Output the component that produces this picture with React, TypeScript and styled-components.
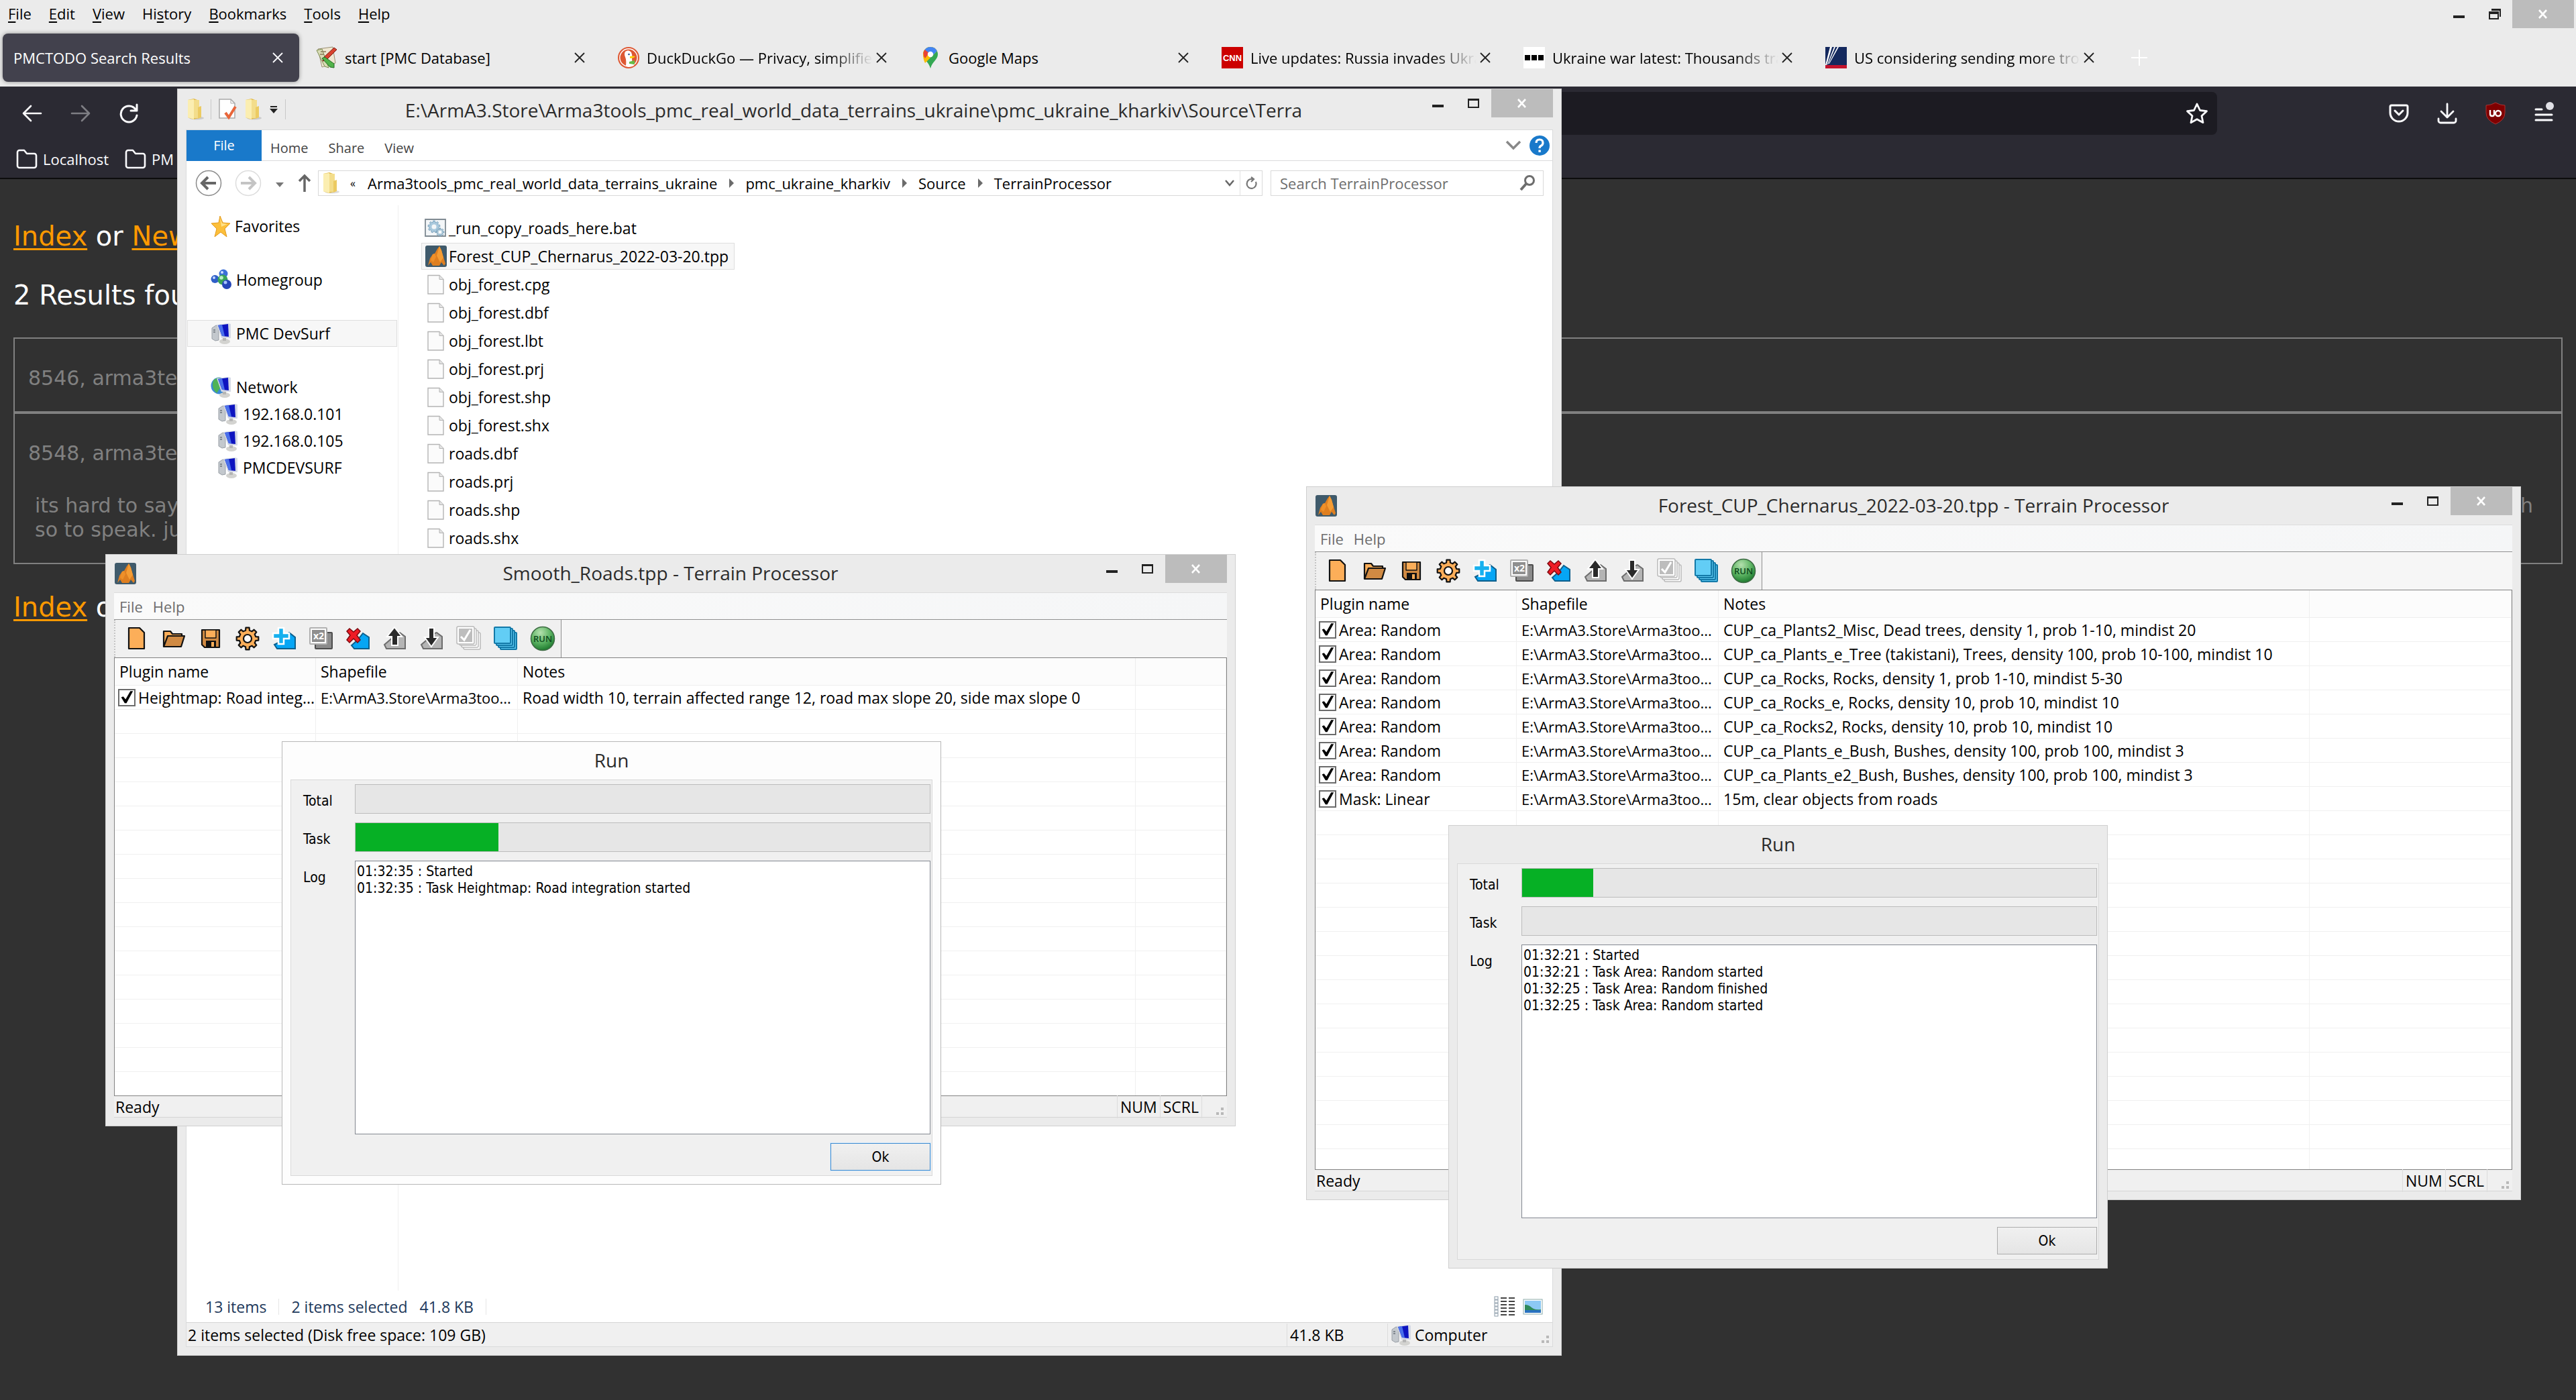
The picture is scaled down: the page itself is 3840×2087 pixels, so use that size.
import React, { useId } from "react";
import styled, { createGlobalStyle, css } from "styled-components";

const ui = `"Open Sans", "Noto Sans", sans-serif`;
const tahoma = `"DejaVu Sans Condensed", "DejaVu Sans", sans-serif`;
const verdana = `"DejaVu Sans", sans-serif`;

const Global = createGlobalStyle`
  *, *::before, *::after { box-sizing: border-box; }
  body { margin: 0; background: #313131; font-family: ${ui}; font-size: 23px; color: #000; }
  button, input, textarea { font: inherit; color: inherit; }
  button { background: none; border: 0; padding: 0; }
  svg { display: block; flex: none; }
`;

/* ---------- desktop ---------- */

const Desktop = styled.div`
  position: relative;
  min-height: 100vh;
  overflow: hidden;
  line-height: 30px;
`;

const Floating = styled.section<{ $x: number; $y: number; $w: number; $h: number; $light?: boolean }>`
  position: absolute;
  left: ${(p) => p.$x}px;
  top: ${(p) => p.$y}px;
  width: ${(p) => p.$w}px;
  height: ${(p) => p.$h}px;
  display: flex;
  flex-direction: column;
  padding: 0 12px 12px;
  background: ${(p) => (p.$light ? "#fdfdfd" : "#ebebeb")};
  border: 1px solid ${(p) => (p.$light ? "#b8b8b8" : "#cfcfcf")};
`;

const TitleBar = styled.header<{ $tall?: boolean }>`
  flex: none;
  height: ${(p) => (p.$tall ? 60 : 56)}px;
  display: grid;
  grid-template-columns: ${(p) => (p.$tall ? "auto 1fr auto" : "1fr auto 1fr")};
  align-items: center;
`;

const TitleText = styled.h2<{ $wide?: boolean }>`
  margin: 0;
  font-size: 28px;
  font-weight: 400;
  line-height: 40px;
  color: #2b2b2b;
  text-align: center;
  white-space: nowrap;
  overflow: hidden;
  padding-${(p) => (p.$wide ? "top" : "bottom")}: 2px;
`;

const TitleIcons = styled.div`
  display: flex;
  align-items: center;
  gap: 9px;
`;

const Controls = styled.div`
  justify-self: end;
  align-self: start;
  display: flex;
`;

const ControlButton = styled.button<{ $close?: boolean }>`
  width: ${(p) => (p.$close ? 92 : 52)}px;
  height: 42px;
  display: flex;
  align-items: center;
  justify-content: center;
  background: ${(p) => (p.$close ? "#bcbcbc" : "transparent")};
`;

const MinIcon = () => (
  <svg width="20" height="20" viewBox="0 0 20 20"><rect x="0" y="12" width="17" height="4" fill="#222" /></svg>
);
const MaxIcon = () => (
  <svg width="20" height="20" viewBox="0 0 20 20"><path d="M2 5h15v11H2z" fill="none" stroke="#222" strokeWidth="2" /><path d="M1 3h17v3H1z" fill="#222" /></svg>
);
const RestoreIcon = () => (
  <svg width="20" height="20" viewBox="0 0 20 20">
    <path d="M5 2h14v12h-2V5H5z" fill="#222" /><path d="M1 6h15v12H1zM3 10v6h11v-6z" fill="#222" fillRule="evenodd" />
  </svg>
);
const CloseIcon = () => (
  <svg width="20" height="20" viewBox="0 0 20 20"><path d="M4 4l11 12M15 4L4 16" stroke="#fff" strokeWidth="2.600" /></svg>
);

const WindowControls = ({ restore }: { restore?: boolean }) => (
  <Controls>
    <ControlButton aria-label="Minimize"><MinIcon /></ControlButton>
    <ControlButton aria-label="Maximize">{restore ? <RestoreIcon /> : <MaxIcon />}</ControlButton>
    <ControlButton aria-label="Close" $close><CloseIcon /></ControlButton>
  </Controls>
);

/* ---------- icons ---------- */

const FolderIcon = () => (
  <svg width="28" height="34" viewBox="0 0 28 34">
    <ellipse cx="16" cy="30" rx="11" ry="2.500" fill="#0002" />
    <path d="M3 3l9-2 8 3v26l-9 2-8-3z" fill="#e3bd4e" />
    <path d="M12 3h8v27h-8z" fill="#f3dd8b" />
    <path d="M3 3l9-1v30l-9-3z" fill="#fbeeb1" />
    <path d="M18 14l5-2v17l-5 2z" fill="#eccb62" />
  </svg>
);
const DocCheckIcon = () => (
  <svg width="30" height="34" viewBox="0 0 30 34">
    <path d="M3 2h17l6 6v22H3z" fill="#fff" stroke="#a9a9a9" strokeWidth="1.500" /><path d="M20 2v6h6" fill="none" stroke="#a9a9a9" />
    <path d="M12 22l5 7 10-16" fill="none" stroke="#e8663a" strokeWidth="4" />
  </svg>
);
const SmallCaret = ({ bar }: { bar?: boolean }) => (
  <svg width="16" height="16" viewBox="0 0 16 16">{bar && <path d="M3 3h10v2H3z" fill="#222" />}<path d="M2 7h12l-6 7z" fill={bar ? "#222" : "#777"} /></svg>
);
const PageIcon = () => (
  <svg width="34" height="34" viewBox="0 0 34 34">
    <path d="M5 3.500h17l6 6V31H5z" fill="#fbfbfb" stroke="#b4b4b4" strokeWidth="1.400" /><path d="M22 3.500v6h6" fill="#e4e4e4" stroke="#b4b4b4" />
  </svg>
);
const gearPath = (cx: number, cy: number, outer: number, inner: number, teeth: number) => {
  const pts: string[] = [];
  for (let i = 0; i < teeth; i++) {
    [[-0.3, inner], [-0.2, outer], [0.2, outer], [0.3, inner]].forEach(([o, r]) => {
      const a = ((i + o) / teeth) * Math.PI * 2 - Math.PI / 2;
      pts.push(`${(cx + Math.cos(a) * r).toFixed(1)} ${(cy + Math.sin(a) * r).toFixed(1)}`);
    });
  }
  return `M${pts.join("L")}Z`;
};
const BatIcon = () => (
  <svg width="34" height="34" viewBox="0 0 34 34">
    <path d="M1 4h30v25H1z" fill="#f3f6f8" stroke="#7f8a92" strokeWidth="1.800" />
    <path d={gearPath(14, 15, 9, 7, 9)} fill="#a9c9dd" stroke="#7fa5bf" /><circle cx="14" cy="15" r="3.500" fill="#f3f6f8" />
    <path d={gearPath(23, 23, 6, 4, 8)} fill="#c3d8e4" stroke="#6f9ab6" /><circle cx="23" cy="23" r="2" fill="#fff" />
  </svg>
);
const TerrainIcon = () => (
  <svg width="34" height="34" viewBox="0 0 34 34">
    <rect x="1" y="1" width="32" height="32" rx="3" fill="#3f5a6b" />
    <path d="M5 31L8 20l4-6 3-1 4-7 3-4 3 6 2 7 4 13-2 3-4-5-3 5H12l-3-5z" fill="#df7f20" />
    <path d="M22 2l3 6 3 11-5 7-5-10z" fill="#f59c33" /><path d="M12 14l3-1 2 5-4 8-4-3z" fill="#ef9029" />
  </svg>
);
const StarFavIcon = () => (
  <svg width="32" height="34" viewBox="0 0 32 34">
    <path d="M14 2l4 10 11 1-8 8 3 12-9-7-9 7 3-12-8-8 11-1z" fill="#fcbf3a" stroke="#e39a1c" /><path d="M14 4l3 9 8 1-9 4z" fill="#ffe28a" />
  </svg>
);
const HomegroupIcon = () => (
  <svg width="34" height="34" viewBox="0 0 34 34">
    <circle cx="19" cy="8" r="6.500" fill="#3c6fd8" /><circle cx="17" cy="6" r="2" fill="#cfe0ff" />
    <circle cx="6.500" cy="16" r="6" fill="#2f5fc8" /><circle cx="5" cy="14" r="2" fill="#c4d8ff" />
    <circle cx="18" cy="17" r="7.500" fill="#3aa457" /><circle cx="16" cy="14" r="2.800" fill="#bdeec6" />
    <circle cx="24" cy="24" r="7" fill="#2546b8" /><circle cx="22" cy="21" r="2.500" fill="#a9c3ff" />
  </svg>
);
const ComputerIcon = ({ globe }: { globe?: boolean }) => (
  <svg width="34" height="34" viewBox="0 0 34 34">
    {globe && <><circle cx="13" cy="15" r="12.500" fill="#3c8ad6" /><path d="M4 7q7-6 13-3l-5 7 3 6-6 9q-9-8-5-19z" fill="#4fb356" /></>}
    {!globe && <><path d="M2 9l6-4 4 1v21l-5 1-5-3z" fill="#c3c8cd" stroke="#9aa0a7" /><path d="M4 12h3M4 15h3" stroke="#6c737b" strokeWidth="1.500" /></>}
    <ellipse cx="21" cy="29" rx="8" ry="4" fill="#d3d3d0" /><path d="M18 24h5v4h-5z" fill="#b5b5b5" />
    <path d="M9 4l17-2 4 1v21l-14 0z" fill="#d5dae6" /><path d="M11 5l15-2 1 19-10-1z" fill="#0d14c0" /><path d="M11 5l6-1 4 17-4 0z" fill="#4a70ea" />
  </svg>
);

/* ---------- browser ---------- */

const MenuBar = styled.nav`
  display: flex;
  height: 40px;
  background: #ebebeb;
  padding: 0 3px 0 12px;
  font-size: 22px;
`;
const Menus = styled.div`
  flex: 1;
  display: flex;
  align-items: center;
  gap: 26px;
`;
const MenuItem = styled.button`
  line-height: 30px;
  u { text-decoration-thickness: 2px; text-underline-offset: 3px; }
`;
const TabStrip = styled.div`
  height: 89px;
  display: flex;
  align-items: center;
  padding: 2px 4px 0;
  background: #ebebeb;
  font-size: 22px;
`;
const Tab = styled.div<{ $active?: boolean }>`
  width: 442px;
  height: 72px;
  margin-right: 8px;
  padding: 0 23px 0 16px;
  display: flex;
  align-items: center;
  gap: 10px;
  border-radius: 8px;
  ${(p) => p.$active && css`
    background: #42414d;
    color: #fff;
    box-shadow: 0 0 6px #0006;
  `}
`;
const TabLabel = styled.span<{ $fade?: boolean }>`
  flex: 1;
  min-width: 0;
  overflow: hidden;
  white-space: nowrap;
  ${(p) => p.$fade && css`mask-image: linear-gradient(to left, transparent 0, #000 64px);`}
`;
const TabClose = styled.button`
  margin-left: -6px;
`;
const NewTab = styled.button`
  padding-left: 21px;
`;
const NavBar = styled.div`
  display: flex;
  align-items: center;
  height: 80px;
  background: #2b2a33;
  color: #fbfbfe;
  padding: 0 30px 0 32px;
`;
const NavGroup = styled.div`
  display: flex;
  align-items: center;
  gap: 40px;
`;
const UrlBox = styled.div`
  flex: 1;
  margin: 0 255px 0 330px;
  height: 64px;
  display: flex;
  align-items: center;
  padding: 0 12px;
  background: #1c1b22;
  border-radius: 8px;
`;
const UrlInput = styled.input`
  flex: 1;
  background: none;
  border: 0;
`;
const Bookmarks = styled.div`
  height: 58px;
  display: flex;
  align-items: center;
  gap: 24px;
  padding: 0 24px 0;
  background: #2b2a33;
  border-bottom: 2px solid #0c0c0d;
  color: #fbfbfe;
  font-size: 22px;
`;
const Bookmark = styled.button`
  display: flex;
  align-items: center;
  gap: 8px;
`;

const PageBody = styled.main`
  padding: 60px 20px;
  font-family: ${verdana};
  color: #fff;
  font-size: 40px;
  line-height: 50px;
`;
const LinkLine = styled.p`
  margin: 0 0 38px;
`;
const FooterLine = styled.p`
  margin: 39px 0 0;
`;
const PageLink = styled.a`
  color: #ff9900;
  text-decoration-thickness: 3px;
  text-underline-offset: 4px;
`;
const ResultBox = styled.article`
  border: 2px solid #808080;
  padding: 41px 20px 31px;
  font-size: 30px;
  line-height: 36px;
  color: #808080;
`;
const ResultHead = styled.p`
  margin: 0;
`;
const ResultText = styled.p`
  margin: 42px 0 0 10px;
  display: flex;
  justify-content: space-between;
  padding-right: 22px;
`;

const TabX = ({ light }: { light?: boolean }) => (
  <svg width="18" height="18" viewBox="0 0 18 18"><path d="M2 2l14 14M16 2L2 16" stroke={light ? "#fbfbfe" : "#222"} strokeWidth="1.800" /></svg>
);

const favicons: Record<string, React.ReactElement> = {
  pmc: (
    <svg width="34" height="34" viewBox="0 0 34 34">
      <path d="M4 4l22-3 4 24-20 6z" fill="#efe7d2" stroke="#9a8f73" /><path d="M2 6l12 24 6 2L10 4z" fill="#d9dcb6" stroke="#7a8b4e" />
      <path d="M12 17L28 2l4 3-16 16-5 1z" fill="#d8432f" stroke="#7d1d14" /><path d="M10 18l4-2 14 10v6l-6-1z" fill="#52b34a" stroke="#256b24" />
      <path d="M8 8h8M7 12h6" stroke="#8a7b5a" strokeWidth="1.500" />
    </svg>
  ),
  duck: (
    <svg width="34" height="34" viewBox="0 0 34 34">
      <circle cx="17" cy="17" r="16" fill="#de5833" /><circle cx="17" cy="17" r="13.200" fill="none" stroke="#fff" strokeWidth="1.400" />
      <path d="M12 8q5-4 9 1 2 4 1 8 0 8 3 12-7 3-12 0 1-8-1-13-2-5 0-8z" fill="#fff" /><circle cx="17.500" cy="12" r="1.300" fill="#2d4f8e" />
      <path d="M19 15q5-1 8 0-2 3-8 3z" fill="#fdd20a" /><path d="M18 23l8-2v6l-8-1z" fill="#65bc46" />
    </svg>
  ),
  maps: (
    <svg width="34" height="34" viewBox="0 0 34 34">
      <path d="M17 1a11 11 0 0 1 11 11c0 8-8 10-11 21C14 22 6 20 6 12A11 11 0 0 1 17 1z" fill="#34a853" />
      <path d="M17 1a11 11 0 0 1 10 6L9 25C7 21 6 17 6 12A11 11 0 0 1 17 1z" fill="#fbbc04" />
      <path d="M17 1a11 11 0 0 1 10 6L17 17 8 6a11 11 0 0 1 9-5z" fill="#4285f4" /><path d="M8.500 5L15 10l-6 8q-5-7-.5-13z" fill="#ea4335" /><circle cx="17" cy="12" r="4.200" fill="#fff" />
    </svg>
  ),
  cnn: (
    <svg width="34" height="34" viewBox="0 0 34 34">
      <rect x="1" y="1" width="32" height="32" fill="#c00" /><text x="17" y="22" textAnchor="middle" fontFamily="Liberation Sans, sans-serif" fontSize="13" fontWeight="700" fill="#fff">CNN</text>
    </svg>
  ),
  bbc: (
    <svg width="34" height="34" viewBox="0 0 34 34"><rect x="1" y="1" width="32" height="32" fill="#fff" /><path d="M3 13h8v8H3zM13 13h8v8h-8zM23 13h8v8h-8z" fill="#000" /></svg>
  ),
  us: (
    <svg width="34" height="34" viewBox="0 0 34 34">
      <rect x="1" y="1" width="32" height="32" fill="#14295e" /><path d="M1 28h32v5H1z" fill="#c3132d" />
      <path d="M1 28L8 1h3L3 28zM4 27L14 1h2L5 27zM6 26L19 1h2L7 26z" fill="#fff" />
    </svg>
  ),
};

const tabs = [
  { label: "PMCTODO Search Results", active: true },
  { label: "start [PMC Database]", icon: "pmc" },
  { label: "DuckDuckGo — Privacy, simplified.", icon: "duck", fade: true },
  { label: "Google Maps", icon: "maps" },
  { label: "Live updates: Russia invades Ukraine", icon: "cnn", fade: true },
  { label: "Ukraine war latest: Thousands trapped", icon: "bbc", fade: true },
  { label: "US considering sending more troops", icon: "us", fade: true },
];

const stroke = { fill: "none", stroke: "#fbfbfe", strokeWidth: 2.6, strokeLinecap: "round" as const, strokeLinejoin: "round" as const };

const BookmarkFolder = () => (
  <svg width="32" height="30" viewBox="0 0 32 30"><path d="M2 5a3 3 0 0 1 3-3h7l4 5h11a3 3 0 0 1 3 3v15a3 3 0 0 1-3 3H5a3 3 0 0 1-3-3z" {...stroke} /></svg>
);

const Browser = () => (
  <>
    <MenuBar>
      <Menus>
        <MenuItem><u>F</u>ile</MenuItem>
        <MenuItem><u>E</u>dit</MenuItem>
        <MenuItem><u>V</u>iew</MenuItem>
        <MenuItem>Hi<u>s</u>tory</MenuItem>
        <MenuItem><u>B</u>ookmarks</MenuItem>
        <MenuItem><u>T</u>ools</MenuItem>
        <MenuItem><u>H</u>elp</MenuItem>
      </Menus>
      <WindowControls restore />
    </MenuBar>
    <TabStrip>
      {tabs.map((t) => (
        <Tab key={t.label} $active={t.active}>
          {t.icon && favicons[t.icon]}
          <TabLabel $fade={t.fade}>{t.label}</TabLabel>
          <TabClose aria-label="Close tab"><TabX light={t.active} /></TabClose>
        </Tab>
      ))}
      <NewTab aria-label="New tab">
        <svg width="28" height="28" viewBox="0 0 28 28"><path d="M14 2v24M2 14h24" stroke="#fff" strokeWidth="2" /></svg>
      </NewTab>
    </TabStrip>
    <NavBar>
      <NavGroup>
        <button aria-label="Back"><svg width="32" height="30" viewBox="0 0 32 30"><path d="M29 15H3M14 4L3 15l11 11" {...stroke} /></svg></button>
        <button aria-label="Forward"><svg width="32" height="30" viewBox="0 0 32 30" opacity="0.4"><path d="M3 15h26M18 4l11 11-11 11" {...stroke} /></svg></button>
        <button aria-label="Reload"><svg width="32" height="30" viewBox="0 0 32 30"><path d="M26 9a12 12 0 1 0 2 9M28 2v9h-9" {...stroke} strokeWidth={3} /></svg></button>
      </NavGroup>
      <UrlBox>
        <UrlInput aria-label="Address" />
        <svg width="36" height="34" viewBox="0 0 36 34"><path d="M18 3l4.500 9.500 10 1.200-7.500 7 2 10-9-5-9 5 2-10-7.500-7 10-1.200z" {...stroke} strokeWidth={2.8} /></svg>
      </UrlBox>
      <NavGroup>
        <button aria-label="Pocket"><svg width="32" height="32" viewBox="0 0 32 32"><path d="M5 4h22a2 2 0 0 1 2 2v9a13 13 0 0 1-26 0V6a2 2 0 0 1 2-2zM10 12l6 6 6-6" {...stroke} strokeWidth={3} /></svg></button>
        <button aria-label="Downloads"><svg width="32" height="32" viewBox="0 0 32 32"><path d="M16 2v20M7 13l9 9 9-9M3 24v3a3 3 0 0 0 3 3h20a3 3 0 0 0 3-3v-3" {...stroke} strokeWidth={2.800} /></svg></button>
        <button aria-label="uBlock Origin">
          <svg width="32" height="34" viewBox="0 0 32 34">
            <path d="M16 1q7 4 14 4v11q0 11-14 17Q2 27 2 16V5q7 0 14-4z" fill="#800000" stroke="#a33" />
            <path d="M8 12v6q0 3 3 3t3-3v-6M14 12v6" fill="none" stroke="#fff" strokeWidth="2.400" /><circle cx="20" cy="17" r="4" fill="none" stroke="#fff" strokeWidth="2.400" />
          </svg>
        </button>
        <button aria-label="Menu"><svg width="34" height="36" viewBox="0 0 34 36"><path d="M4 12h9M4 20h24M4 28h24" {...stroke} strokeWidth={3} /><circle cx="25" cy="7" r="6" fill="#e0e0e6" /></svg></button>
      </NavGroup>
    </NavBar>
    <Bookmarks>
      <Bookmark><BookmarkFolder />Localhost</Bookmark>
      <Bookmark><BookmarkFolder />PM</Bookmark>
    </Bookmarks>
    <PageBody>
      <LinkLine><PageLink href="#index">Index</PageLink> or <PageLink href="#new">New</PageLink></LinkLine>
      <LinkLine>2 Results found</LinkLine>
      <ResultBox>
        <ResultHead>8546, arma3te</ResultHead>
      </ResultBox>
      <ResultBox>
        <ResultHead>8548, arma3te</ResultHead>
        <ResultText><span>its hard to say<br />so to speak. ju</span><span>h</span></ResultText>
      </ResultBox>
      <FooterLine><PageLink href="#index2">Index</PageLink> or</FooterLine>
    </PageBody>
  </>
);

/* ---------- explorer ---------- */

const VSep = styled.span<{ $h: number; $color?: string }>`
  width: 1px;
  height: ${(p) => p.$h}px;
  background: ${(p) => p.$color ?? "#c8c8c8"};
`;
const Ribbon = styled.div`
  flex: none;
  height: 47px;
  display: flex;
  align-items: center;
  background: #fff;
  border: 1px solid #dadbdc;
  color: #444;
  font-size: 20px;
`;
const FileTab = styled.button`
  width: 112px;
  height: 46px;
  background: #1979ca;
  color: #fff;
  margin-right: 13px;
`;
const RibbonTab = styled.button`
  margin-right: 30px;
  padding-top: 8px;
`;
const RibbonEnd = styled.div`
  flex: 1;
  display: flex;
  align-items: center;
  justify-content: flex-end;
  gap: 12px;
  padding-right: 4px;
`;
const ExplorerClient = styled.div`
  flex: 1;
  min-height: 0;
  display: flex;
  flex-direction: column;
  background: #fff;
  border: 1px solid #dadbdc;
  border-top: 0;
`;
const AddressRow = styled.div`
  height: 66px;
  display: flex;
  align-items: center;
  padding: 0 13px;
  font-size: 22px;
`;
const AddressNav = styled.div`
  display: flex;
  align-items: center;
  gap: 19px;
  width: 183px;
`;
const AddressBox = styled.div`
  flex: 1;
  height: 38px;
  display: flex;
  align-items: center;
  border: 1px solid #d9d9d9;
  padding-left: 4px;
`;
const Crumbs = styled.div`
  flex: 1;
  display: flex;
  align-items: center;
  gap: 14px;
  padding-left: 15px;
`;
const CrumbOverflow = styled.button`
  width: 12px;
  font-size: 16px;
  text-align: left;
`;
const AddressEnd = styled.div`
  display: flex;
  align-items: center;
  gap: 8px;
  padding-right: 6px;
`;
const SearchBox = styled.label`
  width: 407px;
  height: 38px;
  margin-left: 12px;
  display: flex;
  align-items: center;
  border: 1px solid #d9d9d9;
  padding: 0 10px 0 13px;
`;
const SearchInput = styled.input`
  flex: 1;
  min-width: 0;
  border: 0;
  padding: 0;
  outline: 0;
  &::placeholder { color: #6d6d6d; opacity: 1; }
`;
const Panes = styled.div`
  flex: 1;
  min-height: 0;
  display: flex;
`;
const Tree = styled.ul`
  width: 316px;
  margin: 0;
  padding: 11px 1px 0;
  list-style: none;
  border-right: 1px solid #f0f0f0;
`;
const TreeItem = styled.li<{ $child?: boolean; $selected?: boolean; $spaced?: boolean }>`
  height: 40px;
  display: flex;
  align-items: center;
  gap: 4px;
  margin-top: ${(p) => (p.$spaced ? 40 : 0)}px;
  padding-left: ${(p) => (p.$child ? 44 : 34)}px;
  border: 1px solid ${(p) => (p.$selected ? "#dedede" : "transparent")};
  background: ${(p) => (p.$selected ? "#f7f7f7" : "none")};
`;
const Files = styled.ul`
  flex: 1;
  margin: 0;
  padding: 14px 0 0 34px;
  list-style: none;
  display: flex;
  flex-direction: column;
  align-items: flex-start;
  gap: 2px;
`;
const FileItem = styled.li<{ $selected?: boolean }>`
  height: 40px;
  display: flex;
  align-items: center;
  gap: 2px;
  padding: 0 8px 0 4px;
  border: 1px solid ${(p) => (p.$selected ? "#dedede" : "transparent")};
  background: ${(p) => (p.$selected ? "#f7f7f7" : "none")};
`;
const Details = styled.div`
  height: 47px;
  display: flex;
  align-items: center;
  padding: 0 14px 0 28px;
  color: #1e395b;
`;
const DetailText = styled.span`
  padding-right: 18px;
`;
const ViewButtons = styled.div`
  flex: 1;
  display: flex;
  justify-content: flex-end;
  align-items: center;
  gap: 10px;
`;
const StatusBar = styled.footer`
  flex: none;
  height: 36px;
  display: flex;
  align-items: center;
  background: #f0f0f0;
  border-top: 1px solid #d5d5d5;
  padding-left: 2px;
`;
const StatusMain = styled.span`
  flex: 1;
`;
const StatusCell = styled.span<{ $w?: number }>`
  height: 34px;
  display: flex;
  align-items: center;
  gap: 2px;
  padding: 0 4px;
  border-left: 1px solid #dcdcdc;
  width: ${(p) => (p.$w ? `${p.$w}px` : "auto")};
`;
const Grip = styled.span`
  flex: 1;
  display: flex;
  align-self: flex-end;
  justify-content: flex-end;
  padding-bottom: 4px;
`;
const GripIcon = () => (
  <svg width="12" height="12" viewBox="0 0 12 12"><path d="M7 0h4v4H7zM7 7h4v4H7zM0 7h4v4H0z" fill="#b9b9b9" /></svg>
);
const CrumbArrow = () => (
  <svg width="14" height="16" viewBox="0 0 14 16"><path d="M4 1l7 7-7 7z" fill="#6b6b6b" /></svg>
);

const fileNames = [
  "_run_copy_roads_here.bat", "Forest_CUP_Chernarus_2022-03-20.tpp", "obj_forest.cpg", "obj_forest.dbf", "obj_forest.lbt",
  "obj_forest.prj", "obj_forest.shp", "obj_forest.shx", "roads.dbf", "roads.prj", "roads.shp", "roads.shx",
];
const fileIcon = (name: string) =>
  name.endsWith(".bat") ? <BatIcon /> : name.endsWith(".tpp") ? <TerrainIcon /> : <PageIcon />;

const RoundArrow = ({ flip }: { flip?: boolean }) => (
  <svg width="40" height="40" viewBox="0 0 40 40">
    <circle cx="20" cy="20" r="18.500" fill="#fff" stroke={flip ? "#dcdcdc" : "#8a8a8a"} strokeWidth="1.500" />
    <path d={flip ? "M9 20h20M21 11l9 9-9 9" : "M31 20H11M19 11l-9 9 9 9"} fill="none" stroke={flip ? "#c4c4c4" : "#666"} strokeWidth="4" />
  </svg>
);

const Explorer = () => (
  <Floating $x={264} $y={132} $w={2064} $h={1889} aria-label="File Explorer">
    <TitleBar $tall>
      <TitleIcons>
        <FolderIcon /><VSep $h={30} /><DocCheckIcon /><FolderIcon /><SmallCaret bar /><VSep $h={30} />
      </TitleIcons>
      <TitleText $wide>E:\ArmA3.Store\Arma3tools_pmc_real_world_data_terrains_ukraine\pmc_ukraine_kharkiv\Source\Terra</TitleText>
      <WindowControls />
    </TitleBar>
    <Ribbon>
      <FileTab>File</FileTab>
      <RibbonTab>Home</RibbonTab>
      <RibbonTab>Share</RibbonTab>
      <RibbonTab>View</RibbonTab>
      <RibbonEnd>
        <svg width="24" height="20" viewBox="0 0 24 20"><path d="M2 4l10 10L22 4" fill="none" stroke="#888" strokeWidth="3.500" /></svg>
        <svg width="30" height="30" viewBox="0 0 30 30">
          <circle cx="15" cy="15" r="15" fill="#1979ca" /><path d="M10 11q0-5 5-5t5 5q0 3-3 4.500-2 1-2 3.500" fill="none" stroke="#fff" strokeWidth="3.200" /><rect x="13.400" y="21.500" width="3.400" height="3.400" fill="#fff" />
        </svg>
      </RibbonEnd>
    </Ribbon>
    <ExplorerClient>
      <AddressRow>
        <AddressNav>
          <RoundArrow /><RoundArrow flip /><SmallCaret />
          <svg width="20" height="28" viewBox="0 0 20 28"><path d="M10 27V4M2 11l8-8 8 8" fill="none" stroke="#666" strokeWidth="3.500" /></svg>
        </AddressNav>
        <AddressBox>
          <FolderIcon />
          <Crumbs>
            <CrumbOverflow>«</CrumbOverflow>
            <button>Arma3tools_pmc_real_world_data_terrains_ukraine</button><CrumbArrow />
            <button>pmc_ukraine_kharkiv</button><CrumbArrow />
            <button>Source</button><CrumbArrow />
            <button>TerrainProcessor</button>
          </Crumbs>
          <AddressEnd>
            <svg width="14" height="12" viewBox="0 0 14 12"><path d="M1 2l6 7 6-7" fill="none" stroke="#666" strokeWidth="2.500" /></svg>
            <VSep $h={36} $color="#e3e3e3" />
            <svg width="18" height="20" viewBox="0 0 18 20"><path d="M15 8a7 7 0 1 1-5-4M8 1l4 3-4 4" fill="none" stroke="#777" strokeWidth="2.200" /></svg>
          </AddressEnd>
        </AddressBox>
        <SearchBox>
          <SearchInput placeholder="Search TerrainProcessor" aria-label="Search TerrainProcessor" />
          <svg width="26" height="26" viewBox="0 0 26 26"><circle cx="16" cy="9" r="6.500" fill="none" stroke="#6d6d6d" strokeWidth="3" /><path d="M11 14L3 23" stroke="#6d6d6d" strokeWidth="4" /></svg>
        </SearchBox>
      </AddressRow>
      <Panes>
        <Tree>
          <TreeItem><StarFavIcon />Favorites</TreeItem>
          <TreeItem $spaced><HomegroupIcon />Homegroup</TreeItem>
          <TreeItem $spaced $selected><ComputerIcon />PMC DevSurf</TreeItem>
          <TreeItem $spaced><ComputerIcon globe />Network</TreeItem>
          <TreeItem $child><ComputerIcon />192.168.0.101</TreeItem>
          <TreeItem $child><ComputerIcon />192.168.0.105</TreeItem>
          <TreeItem $child><ComputerIcon />PMCDEVSURF</TreeItem>
        </Tree>
        <Files>
          {fileNames.map((f) => (
            <FileItem key={f} $selected={f.startsWith("Forest")}>{fileIcon(f)}{f}</FileItem>
          ))}
        </Files>
      </Panes>
      <Details>
        <DetailText>13 items</DetailText>
        <VSep $h={24} $color="#e6e6e6" />
        <DetailText />
        <DetailText>2 items selected</DetailText>
        <DetailText>41.8 KB</DetailText>
        <VSep $h={24} $color="#e6e6e6" />
        <ViewButtons>
          <button aria-label="Details view">
            <svg width="34" height="32" viewBox="0 0 34 32">
              {[0, 1, 2, 3, 4, 5].map((i) => (
                <g key={i}><rect x="2" y={1 + i * 5} width="5" height="4" fill="#fff" stroke="#8a9aa8" /><path d={`M11 ${3 + i * 5}h9M23 ${3 + i * 5}h9`} stroke="#444" strokeWidth="2" /></g>
              ))}
            </svg>
          </button>
          <button aria-label="Thumbnail view">
            <svg width="30" height="24" viewBox="0 0 30 24"><rect x="1" y="1" width="28" height="22" fill="#fff" stroke="#8aa" /><path d="M3 3h24v18H3z" fill="#8cc8f4" /><path d="M3 9q6 0 10 4t14 3v2H3z" fill="#2e8a5a" /><path d="M3 17h24v4H3z" fill="#2a72c0" /></svg>
          </button>
        </ViewButtons>
      </Details>
      <StatusBar>
        <StatusMain>2 items selected (Disk free space: 109 GB)</StatusMain>
        <StatusCell $w={150}>41.8 KB</StatusCell>
        <StatusCell $w={246}><ComputerIcon />Computer<Grip><GripIcon /></Grip></StatusCell>
      </StatusBar>
    </ExplorerClient>
  </Floating>
);

/* ---------- Terrain Processor ---------- */

const AppMenu = styled.nav`
  flex: none;
  height: 41px;
  display: flex;
  align-items: center;
  gap: 15px;
  padding-left: 8px;
  background: linear-gradient(to right, #fafafa, #f5f6f7);
  border-top: 1px solid #dcdcdc;
  border-bottom: 1px solid #909090;
  color: #6d6d6d;
  font-size: 22px;
`;
const ToolRow = styled.div`
  flex: none;
  height: 56px;
  background: #f6f6f6;
  display: flex;
`;
const Toolbar = styled.div`
  display: flex;
  background: #f0f0f0;
  border-left: 2px dotted #c4c4c4;
  border-right: 1px solid #8e8e8e;
  padding-left: 4px;
`;
const ToolButton = styled.button`
  width: 55px;
  display: flex;
  align-items: center;
  justify-content: center;
`;
const ListBox = styled.div`
  flex: 1;
  min-height: 0;
  overflow: hidden;
  background: #fff;
  border: 1px solid #828282;
`;
const Table = styled.table`
  width: 100%;
  table-layout: fixed;
  border-collapse: separate;
  border-spacing: 0;
`;
const Col = styled.col<{ $w?: number }>`
  width: ${(p) => (p.$w ? `${p.$w}px` : "auto")};
`;
const Th = styled.th`
  height: 41px;
  padding: 0 0 0 7px;
  text-align: left;
  font-weight: 400;
  background: #fcfcfc;
  border-right: 1px solid #ededed;
  border-bottom: 1px solid #ededed;
`;
const Td = styled.td<{ $check?: boolean; $path?: boolean }>`
  height: 36px;
  padding: 0 0 0 ${(p) => (p.$check ? 5 : 7)}px;
  font-size: ${(p) => (p.$path ? 22 : 23)}px;
  white-space: nowrap;
  overflow: hidden;
  border-right: 1px solid #f0f0f0;
  border-bottom: 1px solid #f0f0f0;
`;
const CheckLabel = styled.label`
  display: flex;
  align-items: center;
  gap: 4px;
`;
const Checkbox = styled.input`
  appearance: none;
  flex: none;
  width: 26px;
  height: 26px;
  margin: 0;
  border: 2px solid #6b6b6b;
  background: #fff;
  &:checked::before {
    content: "";
    display: block;
    width: 22px;
    height: 22px;
    background: #000;
    clip-path: polygon(12% 50%, 26% 44%, 42% 64%, 74% 8%, 92% 8%, 48% 90%, 36% 90%);
  }
`;

const line = { stroke: "#111", strokeWidth: 2.2, strokeLinejoin: "round" as const };
const grayPage = <path d="M2 27l14-12v-3l9-3 8 6v18H5z" fill="#b4b4b4" stroke="#6c6c6c" strokeWidth="2" />;
const tools: { name: string; art: React.ReactNode }[] = [
  { name: "New", art: <path d="M6 2h16l7 7v24H6z" fill="#fcae59" {...line} /> },
  {
    name: "Open",
    art: <><path d="M3 30V7h10l3 4h14v5" fill="#fcae59" {...line} /><path d="M3 30l6-16h25l-5 16z" fill="#d08a43" {...line} /></>,
  },
  {
    name: "Save",
    art: <><path d="M5 5h26v26H9l-4-4z" fill="#d08a43" {...line} /><path d="M10 5h16v12H10z" fill="#fcae59" {...line} strokeWidth={1.4} /><path d="M11 21h15v10H11z" fill="#111" /><path d="M19 23h4v7h-4z" fill="#fcae59" /></>,
  },
  { name: "Settings", art: <><path d={gearPath(18, 18, 16.5, 12.5, 8)} fill="#fcae59" {...line} /><circle cx="18" cy="18" r="6" fill="#fafafa" {...line} /></> },
  {
    name: "Add plugin",
    art: <><path d="M7 33l-4-6 14-7V14l8-5 9 7v17z" fill="#06a6f5" stroke="#0d5f8c" strokeWidth="2" /><path d="M9 2h8v8h8v8h-8v8H9v-8H1v-8h8z" fill="#16b0ee" stroke="#fff" strokeWidth="2.500" /></>,
  },
  {
    name: "Duplicate",
    art: (
      <>
        <rect x="9" y="9" width="25" height="24" rx="1" fill="#8b8b8b" stroke="#4c4c4c" strokeWidth="2" />
        <rect x="1" y="2" width="25" height="24" rx="1" fill="#fff" stroke="#b0b0b0" strokeWidth="2" /><rect x="4" y="5" width="19" height="18" fill="#8f8f8f" />
        <text x="14" y="19" textAnchor="middle" fontSize="14" fontFamily="Open Sans, sans-serif" fontWeight="700" fill="#fff">x2</text>
      </>
    ),
  },
  {
    name: "Delete",
    art: <><path d="M12 33l-4-5 9-8 8-10 9 6v17z" fill="#06a6f5" stroke="#0d5f8c" strokeWidth="2" /><path d="M1 7l4-4 6 5 6-5 4 4-5 6 5 7-4 4-6-6-6 6-4-4 5-7z" fill="#ee1c25" stroke="#7c0a10" strokeWidth="1.500" /></>,
  },
  { name: "Move up", art: <>{grayPage}<path d="M17 1l11 14h-6v13h-9V15H6z" fill="#2a2a2a" stroke="#fff" strokeWidth="2" /></> },
  { name: "Move down", art: <>{grayPage}<path d="M17 30l10-14h-6V2h-8v14H7z" fill="#2a2a2a" stroke="#fff" strokeWidth="2" /></> },
  {
    name: "Check all",
    art: (
      <>
        {[9, 6, 3].map((o) => <rect key={o} x={o + 1} y={o} width="25" height="25" rx="2" fill="#fff" stroke="#b9b9b9" strokeWidth="1.500" />)}
        <rect x="0" y="0" width="26" height="26" rx="2" fill="#fff" stroke="#b9b9b9" strokeWidth="1.500" />
        <rect x="3" y="3" width="20" height="20" fill="#bdbdbd" /><path d="M6 15l5 5L20 5" fill="none" stroke="#fff" strokeWidth="3" />
      </>
    ),
  },
  {
    name: "Layers",
    art: <>{[9, 6, 3].map((o) => <rect key={o} x={o + 1} y={o} width="24" height="25" rx="1" fill="#5cc6ee" stroke="#1379a8" strokeWidth="2" />)}<rect x="1" y="1" width="24" height="24" rx="1" fill="#62cdf5" stroke="#1379a8" strokeWidth="2" /></>,
  },
  {
    name: "Run",
    art: (
      <>
        <defs>
          <radialGradient id="runGreen" cx="0.4" cy="0.25" r="0.75"><stop offset="0" stopColor="#b4e0ae" /><stop offset="0.55" stopColor="#5fb565" /><stop offset="1" stopColor="#1f7d30" /></radialGradient>
        </defs>
        <circle cx="18" cy="18" r="17.500" fill="url(#runGreen)" stroke="#3d6b43" strokeWidth="1.500" />
        <text x="18" y="23" textAnchor="middle" fontSize="13" fontFamily="Open Sans, sans-serif" fontWeight="600" fill="#0c4a1c">RUN</text>
      </>
    ),
  },
];

type Plugin = { name: string; notes: string };

const AppStatus = styled(StatusBar)`
  height: 32px;
  border-top: 0;
  border-bottom: 1px solid #d5d5d5;
`;

const TerrainWindow = ({ title, x, y, w, h, notesWidth, plugins, rows }: {
  title: string; x: number; y: number; w: number; h: number; notesWidth: number; plugins: Plugin[]; rows: number;
}) => (
  <Floating $x={x} $y={y} $w={w} $h={h} aria-label={title}>
    <TitleBar>
      <TerrainIcon />
      <TitleText>{title}</TitleText>
      <WindowControls />
    </TitleBar>
    <AppMenu><button>File</button><button>Help</button></AppMenu>
    <ToolRow>
      <Toolbar>
        {tools.map((t) => (
          <ToolButton key={t.name} aria-label={t.name}><svg width="38" height="38" viewBox="-1 -1 38 38">{t.art}</svg></ToolButton>
        ))}
      </Toolbar>
    </ToolRow>
    <ListBox>
      <Table>
        <colgroup><Col $w={300} /><Col $w={301} /><Col $w={notesWidth} /><Col /></colgroup>
        <thead><tr><Th>Plugin name</Th><Th>Shapefile</Th><Th>Notes</Th><Th aria-hidden /></tr></thead>
        <tbody>
          {plugins.map((p) => (
            <tr key={p.notes}>
              <Td $check><CheckLabel><Checkbox type="checkbox" defaultChecked />{p.name}</CheckLabel></Td>
              <Td $path>E:\ArmA3.Store\Arma3too...</Td>
              <Td>{p.notes}</Td>
              <Td />
            </tr>
          ))}
          {Array.from({ length: rows - plugins.length }, (_, i) => (
            <tr key={i} aria-hidden><Td /><Td /><Td /><Td /></tr>
          ))}
        </tbody>
      </Table>
    </ListBox>
    <AppStatus>
      <StatusMain>Ready</StatusMain>
      <StatusCell>NUM</StatusCell>
      <StatusCell>SCRL</StatusCell>
      <StatusCell $w={38}><Grip><GripIcon /></Grip></StatusCell>
    </AppStatus>
  </Floating>
);

/* ---------- run dialog ---------- */

const DialogClient = styled.div`
  flex: 1;
  display: grid;
  grid-template-columns: 77px 1fr;
  grid-template-rows: 44px 44px 1fr 41px;
  gap: 13px 0;
  padding: 6px 2px 7px 18px;
  background: #f0f0f0;
  border: 1px solid #d9d9d9;
  font-family: ${tahoma};
  font-size: 21px;
`;
const FieldLabel = styled.label`
  line-height: 44px;
  padding-top: 3px;
`;
const Progress = styled.progress`
  appearance: none;
  width: 100%;
  height: 44px;
  border: 1px solid #bcbcbc;
  &::-webkit-progress-bar { background: #e6e6e6; }
  &::-webkit-progress-value { background: #06b025; }
`;
const Log = styled.textarea`
  width: 100%;
  height: 100%;
  margin: 0;
  padding: 3px 2px;
  resize: none;
  border: 1px solid #828790;
  background: #fff;
  line-height: 25px;
`;
const OkButton = styled.button<{ $focus?: boolean }>`
  grid-column: 2;
  justify-self: end;
  width: 149px;
  border: 1px solid ${(p) => (p.$focus ? "#3c8ad0" : "#acacac")};
  background: linear-gradient(#f0f0f0, #e5e5e5);
  box-shadow: ${(p) => (p.$focus ? "0 0 0 1px #d8ebfa" : "none")};
`;

const RunDialog = ({ x, y, light, total, task, log }: {
  x: number; y: number; light?: boolean; total: number; task: number; log: string[];
}) => {
  const id = useId();
  return (
    <Floating $x={x} $y={y} $w={983} $h={661} $light={light} aria-label="Run">
      <TitleBar><span /><TitleText>Run</TitleText></TitleBar>
      <DialogClient>
        <FieldLabel htmlFor={`${id}total`}>Total</FieldLabel><Progress id={`${id}total`} max={1000} value={total} />
        <FieldLabel htmlFor={`${id}task`}>Task</FieldLabel><Progress id={`${id}task`} max={1000} value={task} />
        <FieldLabel htmlFor={`${id}log`}>Log</FieldLabel><Log id={`${id}log`} readOnly value={log.join("\n")} />
        <OkButton $focus={light}>Ok</OkButton>
      </DialogClient>
    </Floating>
  );
};

const forest: Plugin[] = [
  { name: "Area: Random", notes: "CUP_ca_Plants2_Misc, Dead trees, density 1, prob 1-10, mindist 20" },
  { name: "Area: Random", notes: "CUP_ca_Plants_e_Tree (takistani), Trees, density 100, prob 10-100, mindist 10" },
  { name: "Area: Random", notes: "CUP_ca_Rocks, Rocks, density 1, prob 1-10, mindist 5-30" },
  { name: "Area: Random", notes: "CUP_ca_Rocks_e, Rocks, density 10, prob 10, mindist 10" },
  { name: "Area: Random", notes: "CUP_ca_Rocks2, Rocks, density 10, prob 10, mindist 10" },
  { name: "Area: Random", notes: "CUP_ca_Plants_e_Bush, Bushes, density 100, prob 100, mindist 3" },
  { name: "Area: Random", notes: "CUP_ca_Plants_e2_Bush, Bushes, density 100, prob 100, mindist 3" },
  { name: "Mask: Linear", notes: "15m, clear objects from roads" },
];

export default function App() {
  return (
    <Desktop>
      <Global />
      <Browser />
      <Explorer />
      <TerrainWindow
        title="Smooth_Roads.tpp - Terrain Processor" x={157} y={826} w={1685} h={853} notesWidth={921} rows={17}
        plugins={[{ name: "Heightmap: Road integ...", notes: "Road width 10, terrain affected range 12, road max slope 20, side max slope 0" }]}
      />
      <TerrainWindow
        title="Forest_CUP_Chernarus_2022-03-20.tpp - Terrain Processor" x={1947} y={725} w={1811} h={1064} notesWidth={881} rows={23}
        plugins={forest}
      />
      <RunDialog
        x={420} y={1105} light total={0} task={249}
        log={["01:32:35 : Started", "01:32:35 : Task Heightmap: Road integration started"]}
      />
      <RunDialog
        x={2159} y={1230} total={124} task={0}
        log={["01:32:21 : Started", "01:32:21 : Task Area: Random started", "01:32:25 : Task Area: Random finished", "01:32:25 : Task Area: Random started"]}
      />
    </Desktop>
  );
}
